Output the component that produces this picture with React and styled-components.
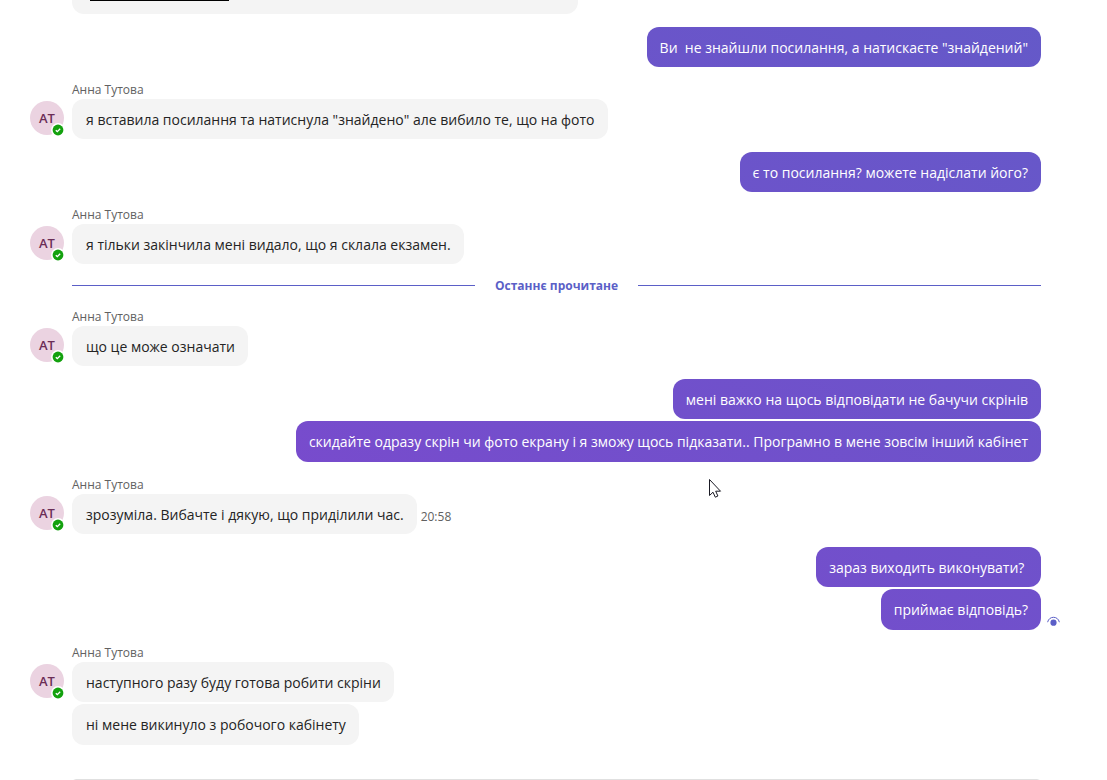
import React from 'react';
import styled, { createGlobalStyle } from 'styled-components';

const GlobalStyle = createGlobalStyle`
  * {
    box-sizing: border-box;
  }
  body {
    margin: 0;
    background: #fff;
    color: #242424;
    font-family: 'Open Sans', 'Noto Sans', sans-serif;
    font-size: 14px;
    overflow: hidden;
  }
`;

const Chat = styled.main`
  position: relative;
  display: flex;
  flex-direction: column;
  height: 100vh;
  padding: 0 66px 0 30px;
  overflow: hidden;
`;

const CutMessage = styled.div`
  flex: none;
  width: 506px;
  max-width: 80%;
  height: 14px;
  margin-left: 42px;
  padding-left: 18px;
  border-radius: 0 0 12px 12px;
  background: #f4f4f4;
`;

const Underline = styled.div`
  width: 139px;
  height: 1px;
  background: #000;
`;

const Group = styled.section`
  display: flex;
  flex: none;
  flex-direction: column;
  gap: 2px;
  margin-top: 13px;
`;

const OwnGroup = styled(Group)`
  align-items: flex-end;
`;

const TheirGroup = styled(Group)`
  display: grid;
  grid-template-columns: 34px 1fr;
  column-gap: 8px;
  row-gap: 0;
`;

const Author = styled.div`
  grid-column: 2;
  height: 19px;
  color: #616161;
  font-size: 12px;
  line-height: 19px;
`;

const Stack = styled.div`
  display: flex;
  flex-direction: column;
  align-items: flex-start;
  gap: 2px;
`;

const Row = styled.div`
  position: relative;
  display: flex;
  align-items: center;
  gap: 4px;
  & + & {
    min-height: 41px;
  }
`;

const Bubble = styled.p`
  align-self: stretch;
  margin: 0;
  padding: 11px 13px 9px 14px;
  border-radius: 12px;
  background: #f4f4f4;
  line-height: 20px;
  white-space: pre-wrap;
`;

// fixed attachment makes all own bubbles share one gradient across the window
const OwnBubble = styled(Bubble)`
  padding-left: 13px;
  background: linear-gradient(to bottom left, #635ac8, #8244cf) fixed;
  color: #fff;
`;

const Avatar = styled.div`
  position: relative;
  display: flex;
  align-items: center;
  justify-content: center;
  width: 34px;
  height: 34px;
  margin-top: 2px;
  border-radius: 50%;
  background: #ebd3e1;
  color: #6b2d56;
  font-size: 13px;
  font-weight: 600;
`;

const Status = styled.svg`
  position: absolute;
  right: -1px;
  bottom: -2px;
`;

const Time = styled.time`
  margin-top: 4px;
  color: #616161;
  font-size: 12px;
`;

const Seen = styled.svg`
  position: absolute;
  right: -19px;
  bottom: 1px;
`;

const LastRead = styled.div`
  display: flex;
  flex: none;
  align-items: center;
  gap: 20px;
  height: 17px;
  margin: 13px 0 0 42px;
  color: #5b5fc7;
  font-size: 12px;
  font-weight: 700;
  &::before,
  &::after {
    content: '';
    flex: 1;
    height: 1px;
    background: #5b5fc7;
  }
`;

const Composer = styled.textarea`
  flex: none;
  height: 44px;
  margin: 34px 0 0 42px;
  border: 1px solid #e0e0e0;
  border-radius: 4px;
  resize: none;
`;

const Cursor = styled.svg`
  position: absolute;
  top: 478px;
  left: 708px;
`;

const TheirMessages = ({ messages, time }) => (
  <TheirGroup>
    <Author>Анна Тутова</Author>
    <Avatar>
      AT
      <Status width="14" height="14" viewBox="0 0 14 14" aria-hidden="true">
        <circle cx="7" cy="7" r="7" fill="#fff" />
        <circle cx="7" cy="7" r="5.4" fill="#13a10e" />
        <path d="M4.8 7.2 6.3 8.6 9.2 5.7" fill="none" stroke="#fff" strokeWidth="1.3" />
      </Status>
    </Avatar>
    <Stack>
      {messages.map(text => (
        <Row key={text}>
          <Bubble>{text}</Bubble>
          {time && <Time>{time}</Time>}
        </Row>
      ))}
    </Stack>
  </TheirGroup>
);

const OwnMessages = ({ messages, seen }) => (
  <OwnGroup>
    {messages.map((text, i) => (
      <Row key={text}>
        <OwnBubble>{text}</OwnBubble>
        {seen && i === messages.length - 1 && (
          <Seen width="13" height="13" viewBox="0 0 13 13" aria-label="Seen">
            <path
              d="M.6 6.2C1.4 2.9 3.8 1.3 6.5 1.3s5.1 1.6 5.9 4.9"
              fill="none"
              stroke="#5b5fc7"
            />
            <circle cx="6.5" cy="6.7" r="3.1" fill="#5b5fc7" />
          </Seen>
        )}
      </Row>
    ))}
  </OwnGroup>
);

const App = () => (
  <>
    <GlobalStyle />
    <Chat>
      <CutMessage>
        <Underline />
      </CutMessage>
      <OwnMessages messages={['Ви  не знайшли посилання, а натискаєте "знайдений"']} />
      <TheirMessages
        messages={['я вставила посилання та натиснула "знайдено" але вибило те, що на фото']}
      />
      <OwnMessages messages={['є то посилання? можете надіслати його?']} />
      <TheirMessages messages={['я тільки закінчила мені видало, що я склала екзамен.']} />
      <LastRead>Останнє прочитане</LastRead>
      <TheirMessages messages={['що це може означати']} />
      <OwnMessages
        messages={[
          'мені важко на щось відповідати не бачучи скрінів',
          'скидайте одразу скрін чи фото екрану і я зможу щось підказати.. Програмно в мене зовсім інший кабінет',
        ]}
      />
      <TheirMessages messages={['зрозуміла. Вибачте і дякую, що приділили час.']} time="20:58" />
      <OwnMessages messages={['зараз виходить виконувати? ', 'приймає відповідь?']} seen />
      <TheirMessages
        messages={['наступного разу буду готова робити скріни', 'ні мене викинуло з робочого кабінету']}
      />
      <Composer aria-label="Message" />
      <Cursor width="14" height="21" viewBox="0 0 14 21" aria-hidden="true">
        <path
          d="M1.5 1.5V17.5L5 14.2 7.3 19.2 9.9 18 7.7 13.2H12.5Z"
          fill="#fff"
          stroke="#1a1a24"
          strokeWidth="1"
        />
      </Cursor>
    </Chat>
  </>
);

export default App;
